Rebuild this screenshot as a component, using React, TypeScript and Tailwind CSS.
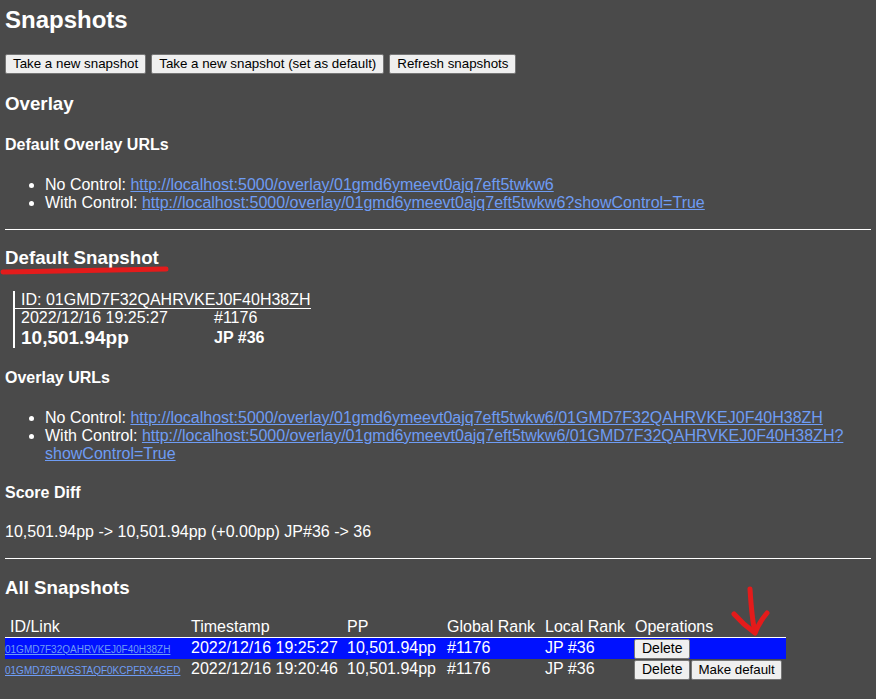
import React from "react";

const FONT = { fontFamily: '"Liberation Sans", Arial, sans-serif' };

const OVERLAY = "http://localhost:5000/overlay/01gmd6ymeevt0ajq7eft5twkw6";
const SNAP_ID = "01GMD7F32QAHRVKEJ0F40H38ZH";

type SnapshotRow = {
    id: string;
    timestamp: string;
    pp: string;
    globalRank: string;
    localRank: string;
    isDefault?: boolean;
};

const rows: SnapshotRow[] = [
    { id: "01GMD7F32QAHRVKEJ0F40H38ZH", timestamp: "2022/12/16 19:25:27", pp: "10,501.94pp", globalRank: "#1176", localRank: "JP #36", isDefault: true },
    { id: "01GMD76PWGSTAQF0KCPFRX4GED", timestamp: "2022/12/16 19:20:46", pp: "10,501.94pp", globalRank: "#1176", localRank: "JP #36" },
];

function Btn({ children, wide = false }: { children: React.ReactNode; wide?: boolean }) {
    return (
        <button
            className={
                (wide ? "px-[7px] " : "px-[6px] ") +
                "h-[20px] bg-[#efefef] border border-[#767676] rounded-[2px] text-black text-[13.33px] leading-[16px] whitespace-nowrap"
            }
        >
            {children}
        </button>
    );
}

function UrlLink({ children }: { children: React.ReactNode }) {
    return <a className="text-[#6e9cf4] underline cursor-pointer">{children}</a>;
}

function Annotations() {
    // red marker strokes drawn over the page
    return (
        <svg className="absolute inset-0 pointer-events-none" width={876} height={699} viewBox="0 0 876 699">
            <g fill="none" stroke="#e41b1b" strokeWidth={5} strokeLinecap="round" strokeLinejoin="round">
                <path d="M3 272 C60 271 120 270 166 269" />
                <path d="M750 589 C751 605 752 620 755 632" />
                <path d="M734 614 C741 622 748 628 755 633 C758 625 762 619 767 613" />
            </g>
        </svg>
    );
}

export default function App() {
    return (
        <div className="relative w-full min-h-[699px] bg-[#4a4a4a] text-white px-[5px] pt-[6px] pb-[20px] overflow-hidden" style={FONT}>
            <h1 className="text-[24px] leading-[28px] font-bold">Snapshots</h1>

            <div className="mt-[20px] flex gap-[5px]">
                <Btn wide>Take a new snapshot</Btn>
                <Btn wide>Take a new snapshot (set as default)</Btn>
                <Btn wide>Refresh snapshots</Btn>
            </div>

            <h3 className="mt-[19px] text-[18.72px] leading-[22px] font-bold">Overlay</h3>

            <h4 className="mt-[21px] text-[16px] leading-[18px] font-bold">Default Overlay URLs</h4>
            <ul className="mt-[22px] pl-[40px] list-disc text-[16px] leading-[18px]">
                <li>No Control: <UrlLink>{OVERLAY}</UrlLink></li>
                <li>With Control: <UrlLink>{OVERLAY}?showControl=True</UrlLink></li>
            </ul>

            <div className="mt-[17px] h-px bg-white" />

            {/* default snapshot */}
            <h3 className="mt-[17px] text-[18.72px] leading-[22px] font-bold">Default Snapshot</h3>
            <div className="mt-[22px] ml-[8px] w-[298px] border-l-2 border-white pl-[6px] text-[16px]">
                <div className="h-[18px] leading-[17px] border-b border-white -ml-[6px] pl-[6px]">ID: {SNAP_ID}</div>
                <div className="grid grid-cols-[193px_1fr] h-[18px] leading-[17px]">
                    <span>2022/12/16 19:25:27</span>
                    <span>#1176</span>
                </div>
                <div className="grid grid-cols-[193px_1fr] h-[21px] items-center font-bold">
                    <span className="text-[19px] leading-[20px]">10,501.94pp</span>
                    <span className="text-[16px] leading-[18px]">JP #36</span>
                </div>
            </div>

            <h4 className="mt-[21px] text-[16px] leading-[18px] font-bold">Overlay URLs</h4>
            <ul className="mt-[22px] pl-[40px] list-disc text-[16px] leading-[18px]">
                <li>No Control: <UrlLink>{OVERLAY}/{SNAP_ID}</UrlLink></li>
                <li>
                    With Control: <UrlLink>{OVERLAY}/{SNAP_ID}?<br />showControl=True</UrlLink>
                </li>
            </ul>

            <h4 className="mt-[21px] text-[16px] leading-[18px] font-bold">Score Diff</h4>
            <p className="mt-[21px] text-[16px] leading-[18px]">10,501.94pp -&gt; 10,501.94pp (+0.00pp) JP#36 -&gt; 36</p>

            <div className="mt-[17px] h-px bg-white" />

            {/* all snapshots */}
            <h3 className="mt-[18px] text-[18.72px] leading-[22px] font-bold">All Snapshots</h3>
            <table className="mt-[18px] w-[781px] table-fixed border-collapse text-[16px] text-left">
                <colgroup>
                    <col className="w-[184px]" />
                    <col className="w-[156px]" />
                    <col className="w-[100px]" />
                    <col className="w-[98px]" />
                    <col className="w-[90px]" />
                    <col className="w-[153px]" />
                </colgroup>
                <thead>
                    <tr className="h-[20px] border-b border-white leading-[18px]">
                        <th className="font-normal pl-[5px] pt-[1px]">ID/Link</th>
                        <th className="font-normal pl-[2px] pt-[1px]">Timestamp</th>
                        <th className="font-normal pl-[2px] pt-[1px]">PP</th>
                        <th className="font-normal pl-[2px] pt-[1px]">Global Rank</th>
                        <th className="font-normal pl-[2px] pt-[1px]">Local Rank</th>
                        <th className="font-normal pl-[2px] pt-[1px]">Operations</th>
                    </tr>
                </thead>
                <tbody>
                    {rows.map((r) => (
                        <tr key={r.id} className={r.isDefault ? "h-[20px] bg-[#0011ff]" : "h-[21px]"}>
                            <td className="text-[10px] leading-[12px] pt-[3px]">
                                <UrlLink>{r.id}</UrlLink>
                            </td>
                            <td className="pl-[2px] leading-[18px] whitespace-nowrap">{r.timestamp}</td>
                            <td className="pl-[2px] leading-[18px]">{r.pp}</td>
                            <td className="pl-[2px] leading-[18px]">{r.globalRank}</td>
                            <td className="pl-[2px] leading-[18px]">{r.localRank}</td>
                            <td className="pl-[1px] align-top">
                                <div className="flex gap-[1px] pt-[1px]">
                                    <Btn><span className="text-[14px] px-[1px]">Delete</span></Btn>
                                    {!r.isDefault && <Btn>Make default</Btn>}
                                </div>
                            </td>
                        </tr>
                    ))}
                </tbody>
            </table>

            <Annotations />
        </div>
    );
}
